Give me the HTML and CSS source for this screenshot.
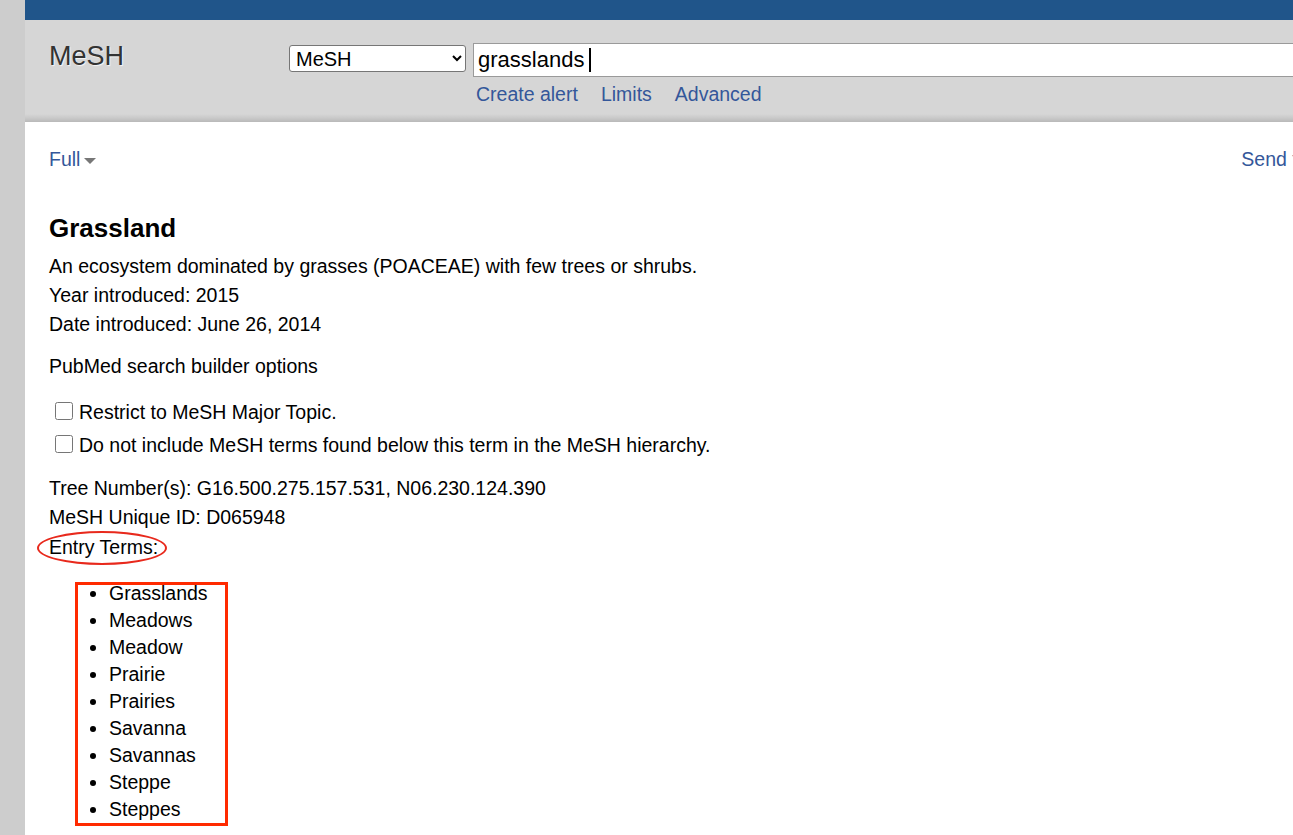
FILE: index.html
```html
<!DOCTYPE html>
<html>
<head>
<meta charset="utf-8">
<title>MeSH - Grassland</title>
<link rel="stylesheet" href="styles.css">
</head>
<body>
<div class="page">
  <div class="side"></div>
  <div class="main">
    <div class="topbar"></div>
    <div class="header">
      <div class="title">MeSH</div>
      <div class="search">
        <div class="search-row">
          <select class="db">
            <option>MeSH</option>
          </select>
          <div class="term">grasslands<span class="caret"></span></div>
        </div>
        <div class="links">
          <a href="#">Create alert</a>
          <a href="#">Limits</a>
          <a href="#">Advanced</a>
        </div>
      </div>
    </div>
    <div class="content">
      <div class="toolbar">
        <a href="#" class="menu">Full<span class="tri"></span></a>
        <a href="#" class="menu">Send to:<span class="tri"></span></a>
      </div>
      <h1 class="heading">Grassland</h1>
      <p class="lines">An ecosystem dominated by grasses (POACEAE) with few trees or shrubs.<br>Year introduced: 2015<br>Date introduced: June 26, 2014</p>
      <p class="builder">PubMed search builder options</p>
      <div class="checks">
        <label class="check"><input type="checkbox"><span>Restrict to MeSH Major Topic.</span></label>
        <label class="check"><input type="checkbox"><span>Do not include MeSH terms found below this term in the MeSH hierarchy.</span></label>
      </div>
      <p class="lines info">Tree Number(s): G16.500.275.157.531, N06.230.124.390<br>MeSH Unique ID: D065948</p>
      <p class="entry-line"><span class="entry">Entry Terms:<span class="ellipse"></span></span></p>
      <div class="terms-wrap">
        <ul class="terms">
          <li>Grasslands</li>
          <li>Meadows</li>
          <li>Meadow</li>
          <li>Prairie</li>
          <li>Prairies</li>
          <li>Savanna</li>
          <li>Savannas</li>
          <li>Steppe</li>
          <li>Steppes</li>
        </ul>
        <div class="box"></div>
      </div>
    </div>
  </div>
</div>
</body>
</html>
```

FILE: styles.css
```css
html, body {
  margin: 0;
  padding: 0;
  overflow: hidden;
  background: #fff;
}
body {
  font-family: "Liberation Sans", Arial, sans-serif;
  color: #000;
}
.page {
  display: flex;
  width: 1354px;
  min-height: 835px;
}
.side {
  width: 25px;
  flex: none;
  background: #cdcdcd;
}
.main {
  flex: 1;
  min-width: 0;
}
.topbar {
  height: 20px;
  background: #20558a;
}
.header {
  height: 102px;
  box-sizing: border-box;
  padding: 23px 0 0 24px;
  display: flex;
  background: linear-gradient(to bottom, #d6d6d6 0, #d6d6d6 94px, #c9c9c9 98px, #b9b9b9 102px);
}
.title {
  width: 240px;
  flex: none;
  font-size: 27px;
  line-height: 27px;
  margin-top: 0;
  color: #333;
  text-shadow: 1px 1px 1px rgba(255,255,255,0.8);
}
.search {
  flex: 1;
}
.search-row {
  display: flex;
  align-items: flex-start;
  gap: 7px;
}
.db {
  width: 177px;
  height: 27px;
  margin-top: 2px;
  font-family: "Liberation Sans", Arial, sans-serif;
  font-size: 20px;
  border: 1px solid #767676;
  border-radius: 3px;
  background: #fff;
  color: #000;
  padding: 0 2px;
}
.term {
  width: 900px;
  height: 34px;
  box-sizing: border-box;
  background: #fff;
  border: 1px solid #9a9a9a;
  font-size: 22px;
  line-height: 32px;
  padding-left: 4px;
  display: flex;
  align-items: center;
}
.caret {
  display: inline-block;
  width: 2px;
  height: 24px;
  background: #000;
  margin-left: 5px;
}
.links {
  display: flex;
  gap: 23px;
  margin: 5px 0 0 187px;
  font-size: 19.5px;
  line-height: 24px;
}
a {
  color: #34579a;
  text-decoration: none;
}
.content {
  padding: 25px 24px 0 24px;
}
.toolbar {
  display: flex;
  justify-content: space-between;
  font-size: 19.5px;
  line-height: 24px;
}
.menu {
  display: flex;
  align-items: center;
}
.tri {
  display: inline-block;
  width: 0;
  height: 0;
  border-left: 6px solid transparent;
  border-right: 6px solid transparent;
  border-top: 6px solid #777;
  margin: 4px 0 0 4px;
}
.heading {
  margin: 42px 0 0 0;
  font-size: 26px;
  line-height: 30px;
  font-weight: bold;
}
.lines {
  margin: 9px 0 0 0;
  font-size: 19.5px;
  line-height: 29px;
}
.builder {
  margin: 13px 0 0 0;
  font-size: 19.5px;
  line-height: 29px;
}
.checks {
  margin-top: 17px;
  display: flex;
  flex-direction: column;
  gap: 4px;
}
.check {
  display: flex;
  align-items: center;
  font-size: 19.5px;
  line-height: 29px;
}
.check input {
  width: 18px;
  height: 18px;
  margin: -3px 6px 0 6px;
}
.info {
  margin-top: 14px;
}
.entry-line {
  margin: 1px 0 0 0;
  font-size: 19.5px;
  line-height: 29px;
}
.entry {
  position: relative;
}
.ellipse {
  position: absolute;
  left: -12px;
  top: -5px;
  width: 126px;
  height: 30px;
  border: 2px solid #e8291c;
  border-radius: 50%;
}
.terms-wrap {
  position: relative;
  margin-top: 18px;
}
.terms {
  margin: 0;
  padding-left: 60px;
  font-size: 19.5px;
  line-height: 27px;
}
.box {
  position: absolute;
  left: 26px;
  top: 2px;
  width: 147px;
  height: 238px;
  border: 3px solid #ff2a00;
}
```
